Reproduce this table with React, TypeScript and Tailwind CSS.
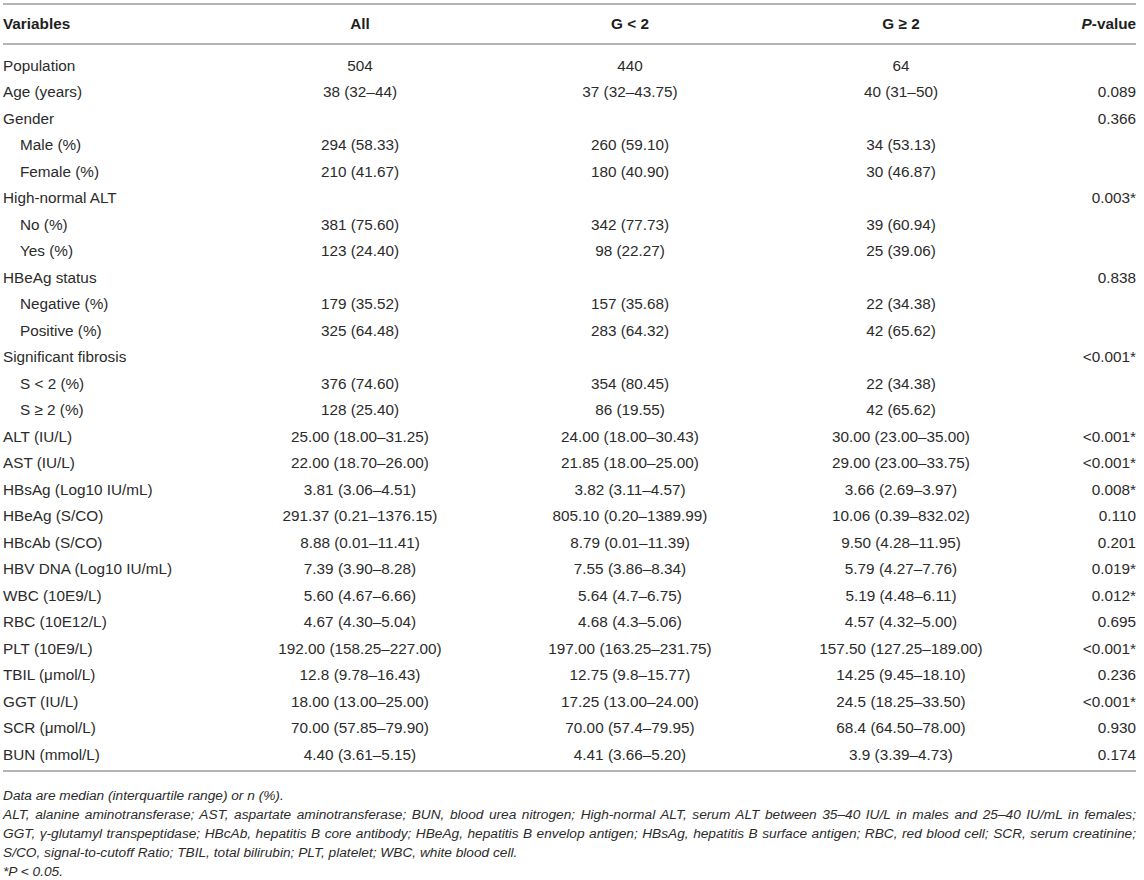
import React from "react";

type Row = { label: string; all?: string; g1?: string; g2?: string; p?: string; indent?: boolean };

const rows: Row[] = [
  { label: "Population", all: "504", g1: "440", g2: "64" },
  { label: "Age (years)", all: "38 (32–44)", g1: "37 (32–43.75)", g2: "40 (31–50)", p: "0.089" },
  { label: "Gender", p: "0.366" },
  { label: "Male (%)", all: "294 (58.33)", g1: "260 (59.10)", g2: "34 (53.13)", indent: true },
  { label: "Female (%)", all: "210 (41.67)", g1: "180 (40.90)", g2: "30 (46.87)", indent: true },
  { label: "High-normal ALT", p: "0.003*" },
  { label: "No (%)", all: "381 (75.60)", g1: "342 (77.73)", g2: "39 (60.94)", indent: true },
  { label: "Yes (%)", all: "123 (24.40)", g1: "98 (22.27)", g2: "25 (39.06)", indent: true },
  { label: "HBeAg status", p: "0.838" },
  { label: "Negative (%)", all: "179 (35.52)", g1: "157 (35.68)", g2: "22 (34.38)", indent: true },
  { label: "Positive (%)", all: "325 (64.48)", g1: "283 (64.32)", g2: "42 (65.62)", indent: true },
  { label: "Significant fibrosis", p: "<0.001*" },
  { label: "S < 2 (%)", all: "376 (74.60)", g1: "354 (80.45)", g2: "22 (34.38)", indent: true },
  { label: "S ≥ 2 (%)", all: "128 (25.40)", g1: "86 (19.55)", g2: "42 (65.62)", indent: true },
  { label: "ALT (IU/L)", all: "25.00 (18.00–31.25)", g1: "24.00 (18.00–30.43)", g2: "30.00 (23.00–35.00)", p: "<0.001*" },
  { label: "AST (IU/L)", all: "22.00 (18.70–26.00)", g1: "21.85 (18.00–25.00)", g2: "29.00 (23.00–33.75)", p: "<0.001*" },
  { label: "HBsAg (Log10 IU/mL)", all: "3.81 (3.06–4.51)", g1: "3.82 (3.11–4.57)", g2: "3.66 (2.69–3.97)", p: "0.008*" },
  { label: "HBeAg (S/CO)", all: "291.37 (0.21–1376.15)", g1: "805.10 (0.20–1389.99)", g2: "10.06 (0.39–832.02)", p: "0.110" },
  { label: "HBcAb (S/CO)", all: "8.88 (0.01–11.41)", g1: "8.79 (0.01–11.39)", g2: "9.50 (4.28–11.95)", p: "0.201" },
  { label: "HBV DNA (Log10 IU/mL)", all: "7.39 (3.90–8.28)", g1: "7.55 (3.86–8.34)", g2: "5.79 (4.27–7.76)", p: "0.019*" },
  { label: "WBC (10E9/L)", all: "5.60 (4.67–6.66)", g1: "5.64 (4.7–6.75)", g2: "5.19 (4.48–6.11)", p: "0.012*" },
  { label: "RBC (10E12/L)", all: "4.67 (4.30–5.04)", g1: "4.68 (4.3–5.06)", g2: "4.57 (4.32–5.00)", p: "0.695" },
  { label: "PLT (10E9/L)", all: "192.00 (158.25–227.00)", g1: "197.00 (163.25–231.75)", g2: "157.50 (127.25–189.00)", p: "<0.001*" },
  { label: "TBIL (μmol/L)", all: "12.8 (9.78–16.43)", g1: "12.75 (9.8–15.77)", g2: "14.25 (9.45–18.10)", p: "0.236" },
  { label: "GGT (IU/L)", all: "18.00 (13.00–25.00)", g1: "17.25 (13.00–24.00)", g2: "24.5 (18.25–33.50)", p: "<0.001*" },
  { label: "SCR (μmol/L)", all: "70.00 (57.85–79.90)", g1: "70.00 (57.4–79.95)", g2: "68.4 (64.50–78.00)", p: "0.930" },
  { label: "BUN (mmol/L)", all: "4.40 (3.61–5.15)", g1: "4.41 (3.66–5.20)", g2: "3.9 (3.39–4.73)", p: "0.174" },
];

const grid = "grid grid-cols-[237px_240px_300px_242px_1fr] items-center";

export default function App() {
  return (
    <div className="w-[1144px] h-[880px] overflow-hidden bg-white text-[#2b2b2b] font-['Liberation_Sans',Arial,sans-serif] pl-[3px] pr-[8px] pt-[3px]">
      <div className="border-t-2 border-b-2 border-[#b4b4b4]">
        <div className={`${grid} h-[38px] font-bold text-[15.3px] text-[#1e1e1e]`}>
          <div>Variables</div>
          <div className="text-center">All</div>
          <div className="text-center">G &lt; 2</div>
          <div className="text-center">G ≥ 2</div>
          <div className="text-right">
            <span className="italic">P</span>-value
          </div>
        </div>
      </div>
      <div className="border-b-2 border-[#b4b4b4] pt-[8px] pb-[1px] text-[15.3px]">
        {rows.map((r, i) => (
          <div key={i} className={`${grid} h-[26.5px] whitespace-nowrap`}>
            <div className={r.indent ? "pl-[17px]" : ""}>{r.label}</div>
            <div className="text-center">{r.all ?? ""}</div>
            <div className="text-center">{r.g1 ?? ""}</div>
            <div className="text-center">{r.g2 ?? ""}</div>
            <div className="text-right">{r.p ?? ""}</div>
          </div>
        ))}
      </div>
      <div className="pt-[14px] italic text-[13.7px] leading-[19px] text-[#2b2b2b]">
        <div>Data are median (interquartile range) or n (%).</div>
        <div className="text-justify [text-align-last:justify]">
          ALT, alanine aminotransferase; AST, aspartate aminotransferase; BUN, blood urea nitrogen; High-normal ALT, serum ALT between 35–40 IU/L in males and 25–40 IU/mL in females;
        </div>
        <div className="text-justify [text-align-last:justify]">
          GGT, γ-glutamyl transpeptidase; HBcAb, hepatitis B core antibody; HBeAg, hepatitis B envelop antigen; HBsAg, hepatitis B surface antigen; RBC, red blood cell; SCR, serum creatinine;
        </div>
        <div>S/CO, signal-to-cutoff Ratio; TBIL, total bilirubin; PLT, platelet; WBC, white blood cell.</div>
        <div>*P &lt; 0.05.</div>
      </div>
    </div>
  );
}
